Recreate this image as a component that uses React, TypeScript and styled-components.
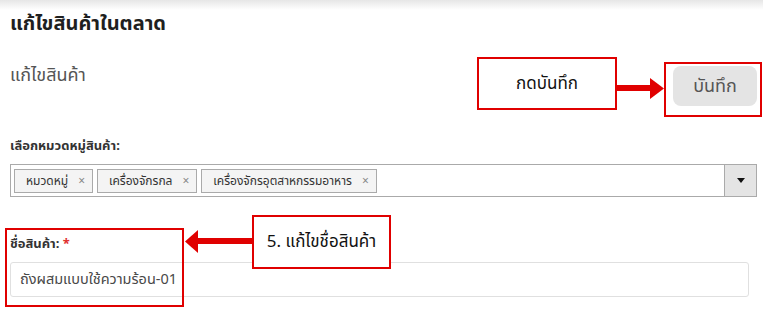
import styled, { createGlobalStyle } from 'styled-components';

const GlobalStyle = createGlobalStyle`
  html, body {
    margin: 0;
    padding: 0;
    background: #ffffff;
  }
  body {
    font-family: "Noto Sans", "Noto Sans Thai", "Liberation Sans", sans-serif;
    color: #333;
  }
`;

const Page = styled.div`
  position: relative;
  width: 763px;
  height: 318px;
  box-sizing: border-box;
  padding: 0 6px 0 10px;
  overflow: hidden;
  background: linear-gradient(#e6e6e6 0, #ffffff 10px) no-repeat;
`;

const Title = styled.h1`
  margin: 0;
  padding-top: 10px;
  font-size: 20px;
  line-height: 26px;
  font-weight: 700;
  color: #1f1f1f;
`;

const TopRow = styled.div`
  display: flex;
  justify-content: space-between;
  align-items: flex-start;
  margin-top: 28px;
`;

const Subtitle = styled.div`
  font-size: 18px;
  line-height: 24px;
  color: #555;
  margin-top: -2px;
`;

const SaveButton = styled.button`
  width: 84px;
  height: 40px;
  border: none;
  border-radius: 8px;
  background: #e4e4e4;
  color: #555;
  font-family: inherit;
  font-size: 18px;
  margin-top: 2px;
`;

const Field = styled.div<{ $top: number }>`
  margin-top: ${(p) => p.$top}px;
`;

const Label = styled.div`
  font-size: 13px;
  line-height: 18px;
  font-weight: 700;
  color: #333;
  margin-bottom: 10px;
`;

const Req = styled.span`
  color: #e0302f;
`;

const Select = styled.div`
  display: flex;
  align-items: center;
  height: 33px;
  box-sizing: border-box;
  border: 1px solid #aaaaaa;
  padding-left: 3px;
`;

const Tags = styled.div`
  flex: 1;
  display: flex;
  gap: 4px;
`;

const Tag = styled.span`
  display: inline-flex;
  align-items: center;
  gap: 10px;
  height: 24px;
  box-sizing: border-box;
  padding: 0 7px 0 11px;
  border: 1px solid #aaaaaa;
  background: #f4f4f4;
  font-size: 12px;
  color: #333;
`;

const Remove = styled.span`
  font-size: 12px;
  color: #888;
`;

const DropButton = styled.div`
  width: 31px;
  height: 100%;
  display: flex;
  align-items: center;
  justify-content: center;
  background: #e4e4e4;
  border-left: 1px solid #aaaaaa;
`;

const Caret = styled.span`
  width: 0;
  height: 0;
  border-left: 4px solid transparent;
  border-right: 4px solid transparent;
  border-top: 5px solid #111;
`;

const TextInput = styled.input`
  display: block;
  width: 739px;
  height: 35px;
  box-sizing: border-box;
  border: 1px solid #e0e0e0;
  border-radius: 3px;
  padding: 0 9px;
  font-family: inherit;
  font-size: 14.5px;
  color: #484848;
  outline: none;
`;

const Highlight = styled.div<{ $x: number; $y: number; $w: number; $h: number }>`
  position: absolute;
  left: ${(p) => p.$x}px;
  top: ${(p) => p.$y}px;
  width: ${(p) => p.$w}px;
  height: ${(p) => p.$h}px;
  box-sizing: border-box;
  border: 2px solid #e00000;
  pointer-events: none;
`;

const Callout = styled(Highlight)`
  display: flex;
  align-items: center;
  justify-content: center;
  background: #ffffff;
  font-size: 17px;
  color: #111;
`;

const Arrow = styled.svg<{ $x: number; $y: number }>`
  position: absolute;
  left: ${(p) => p.$x}px;
  top: ${(p) => p.$y}px;
`;

export default function App() {
  return (
    <>
      <GlobalStyle />
      <Page>
        <Title>แก้ไขสินค้าในตลาด</Title>
        <TopRow>
          <Subtitle>แก้ไขสินค้า</Subtitle>
          <SaveButton>บันทึก</SaveButton>
        </TopRow>

        <Field $top={30}>
          <Label>เลือกหมวดหมู่สินค้า:</Label>
          <Select>
            <Tags>
              <Tag>
                หมวดหมู่ <Remove>×</Remove>
              </Tag>
              <Tag>
                เครื่องจักรกล <Remove>×</Remove>
              </Tag>
              <Tag>
                เครื่องจักรอุตสาหกรรมอาหาร <Remove>×</Remove>
              </Tag>
            </Tags>
            <DropButton>
              <Caret />
            </DropButton>
          </Select>
        </Field>

        <Field $top={37}>
          <Label>
            ชื่อสินค้า: <Req>*</Req>
          </Label>
          <TextInput defaultValue="ถังผสมแบบใช้ความร้อน-01" />
        </Field>

        {/* annotations */}
        <Callout $x={477} $y={57} $w={140} $h={53}>
          กดบันทึก
        </Callout>
        <Arrow $x={616} $y={78} width={48} height={21} viewBox="0 0 48 21">
          <rect x="0" y="7" width="36" height="6" fill="#e00000" />
          <polygon points="34,0 48,10.5 34,21" fill="#e00000" />
        </Arrow>
        <Highlight $x={664} $y={62} $w={98} $h={55} />

        <Highlight $x={5} $y={228} $w={179} $h={79} />
        <Arrow $x={185} $y={230} width={68} height={23} viewBox="0 0 68 23">
          <rect x="10" y="8" width="58" height="6" fill="#e00000" />
          <polygon points="0,11.5 13,0 13,23" fill="#e00000" />
        </Arrow>
        <Callout $x={252} $y={215} $w={139} $h={54}>
          5. แก้ไขชื่อสินค้า
        </Callout>
      </Page>
    </>
  );
}
